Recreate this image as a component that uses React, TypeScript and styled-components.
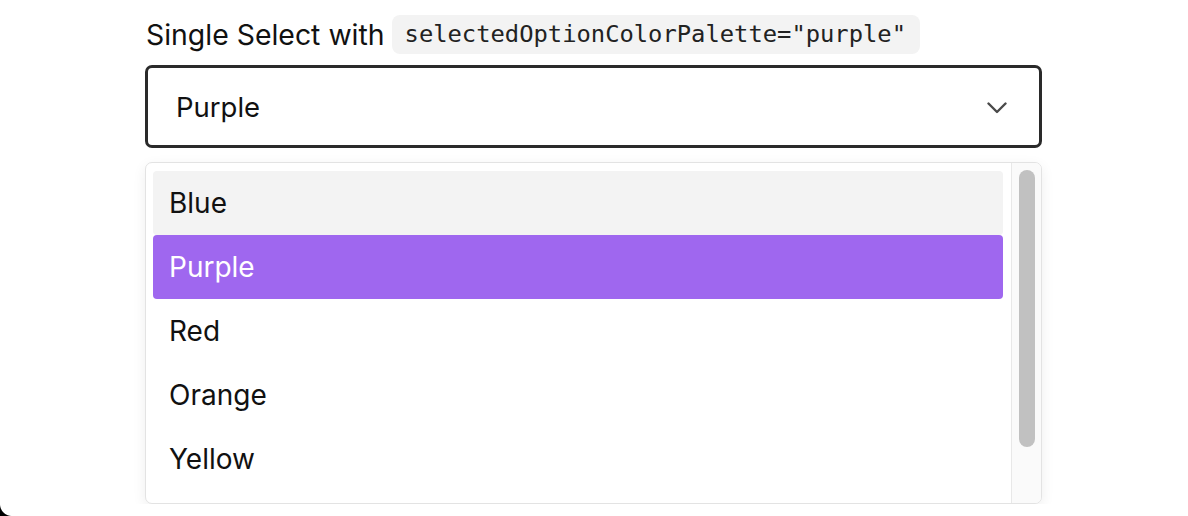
import React from "react";
import styled, { createGlobalStyle } from "styled-components";

const GlobalStyle = createGlobalStyle`
  html, body { margin: 0; padding: 0; background: #ffffff; }
  body { font-family: Inter, "Noto Sans", sans-serif; color: #111111; }
`;

const Page = styled.div`
  width: 897px;
  margin-left: 145px;
  padding-top: 15px;
  display: flex;
  flex-direction: column;
`;

const LabelRow = styled.div`
  display: flex;
  align-items: center;
  gap: 7px;
  height: 39px;
  margin-left: 1px;
`;

const LabelText = styled.span`
  font-size: 28.4px;
  line-height: 39px;
  font-weight: 400;
  color: #111111;
`;

const Code = styled.code`
  font-family: "DejaVu Sans Mono", "Liberation Mono", monospace;
  font-size: 23.8px;
  line-height: 39px;
  height: 39px;
  padding: 0 14px 0 13px;
  background: #f3f3f3;
  color: #222222;
  border-radius: 8px;
`;

const SelectBox = styled.div`
  margin-top: 11px;
  height: 83px;
  box-sizing: border-box;
  border: 3px solid #2a2a2a;
  border-radius: 7px;
  display: flex;
  align-items: center;
  justify-content: space-between;
  padding: 0 32px 0 28px;
`;

const SelectValue = styled.span`
  font-size: 27.5px;
  color: #111111;
`;

const Chevron = styled.svg`
  display: block;
  margin-top: 2px;
`;

const Dropdown = styled.div`
  margin-top: 14px;
  height: 342px;
  box-sizing: border-box;
  border: 1px solid #e3e3e3;
  border-radius: 7px;
  box-shadow: 0 4px 14px rgba(0, 0, 0, 0.07);
  overflow: hidden;
  background: #ffffff;
  display: flex;
`;

const List = styled.ul`
  list-style: none;
  margin: 0;
  flex: 1;
  box-sizing: border-box;
  padding: 8px 8px 8px 7px;
  overflow: hidden;
  display: flex;
  flex-direction: column;
`;

const Option = styled.li<{ $state: "hover" | "selected" | "none" }>`
  flex: 0 0 64px;
  display: flex;
  align-items: center;
  padding-left: 16px;
  border-radius: 4px;
  font-size: 28px;
  color: ${(p) => (p.$state === "selected" ? "#ffffff" : "#111111")};
  background: ${(p) =>
    p.$state === "selected" ? "#9f67ef" : p.$state === "hover" ? "#f3f3f3" : "transparent"};
`;

const ScrollTrack = styled.div`
  flex: 0 0 30px;
  box-sizing: border-box;
  background: #fafafa;
  border-left: 1px solid #e8e8e8;
  padding: 7px 6px 0 7px;
`;

const ScrollThumb = styled.div`
  height: 277px;
  border-radius: 8px;
  background: #c1c1c1;
`;

const Corner = styled.div`
  position: fixed;
  left: 0;
  bottom: 0;
  width: 12px;
  height: 12px;
  background: radial-gradient(circle at 100% 0, transparent 11.5px, #000000 12.5px);
`;

const options = ["Blue", "Purple", "Red", "Orange", "Yellow"];

export default function App() {
  return (
    <>
      <GlobalStyle />
      <Page>
        <LabelRow>
          <LabelText>Single Select with</LabelText>
          <Code>selectedOptionColorPalette="purple"</Code>
        </LabelRow>
        <SelectBox>
          <SelectValue>Purple</SelectValue>
          <Chevron width="20" height="12" viewBox="0 0 20 12" fill="none">
            <polyline
              points="1.5,1.5 10,10 18.5,1.5"
              stroke="#4a4a4a"
              strokeWidth="2.4"
              strokeLinecap="round"
              strokeLinejoin="round"
            />
          </Chevron>
        </SelectBox>
        <Dropdown>
          <List>
            {options.map((o, i) => (
              <Option key={o} $state={i === 0 ? "hover" : i === 1 ? "selected" : "none"}>
                {o}
              </Option>
            ))}
          </List>
          <ScrollTrack>
            <ScrollThumb />
          </ScrollTrack>
        </Dropdown>
      </Page>
      <Corner />
    </>
  );
}
